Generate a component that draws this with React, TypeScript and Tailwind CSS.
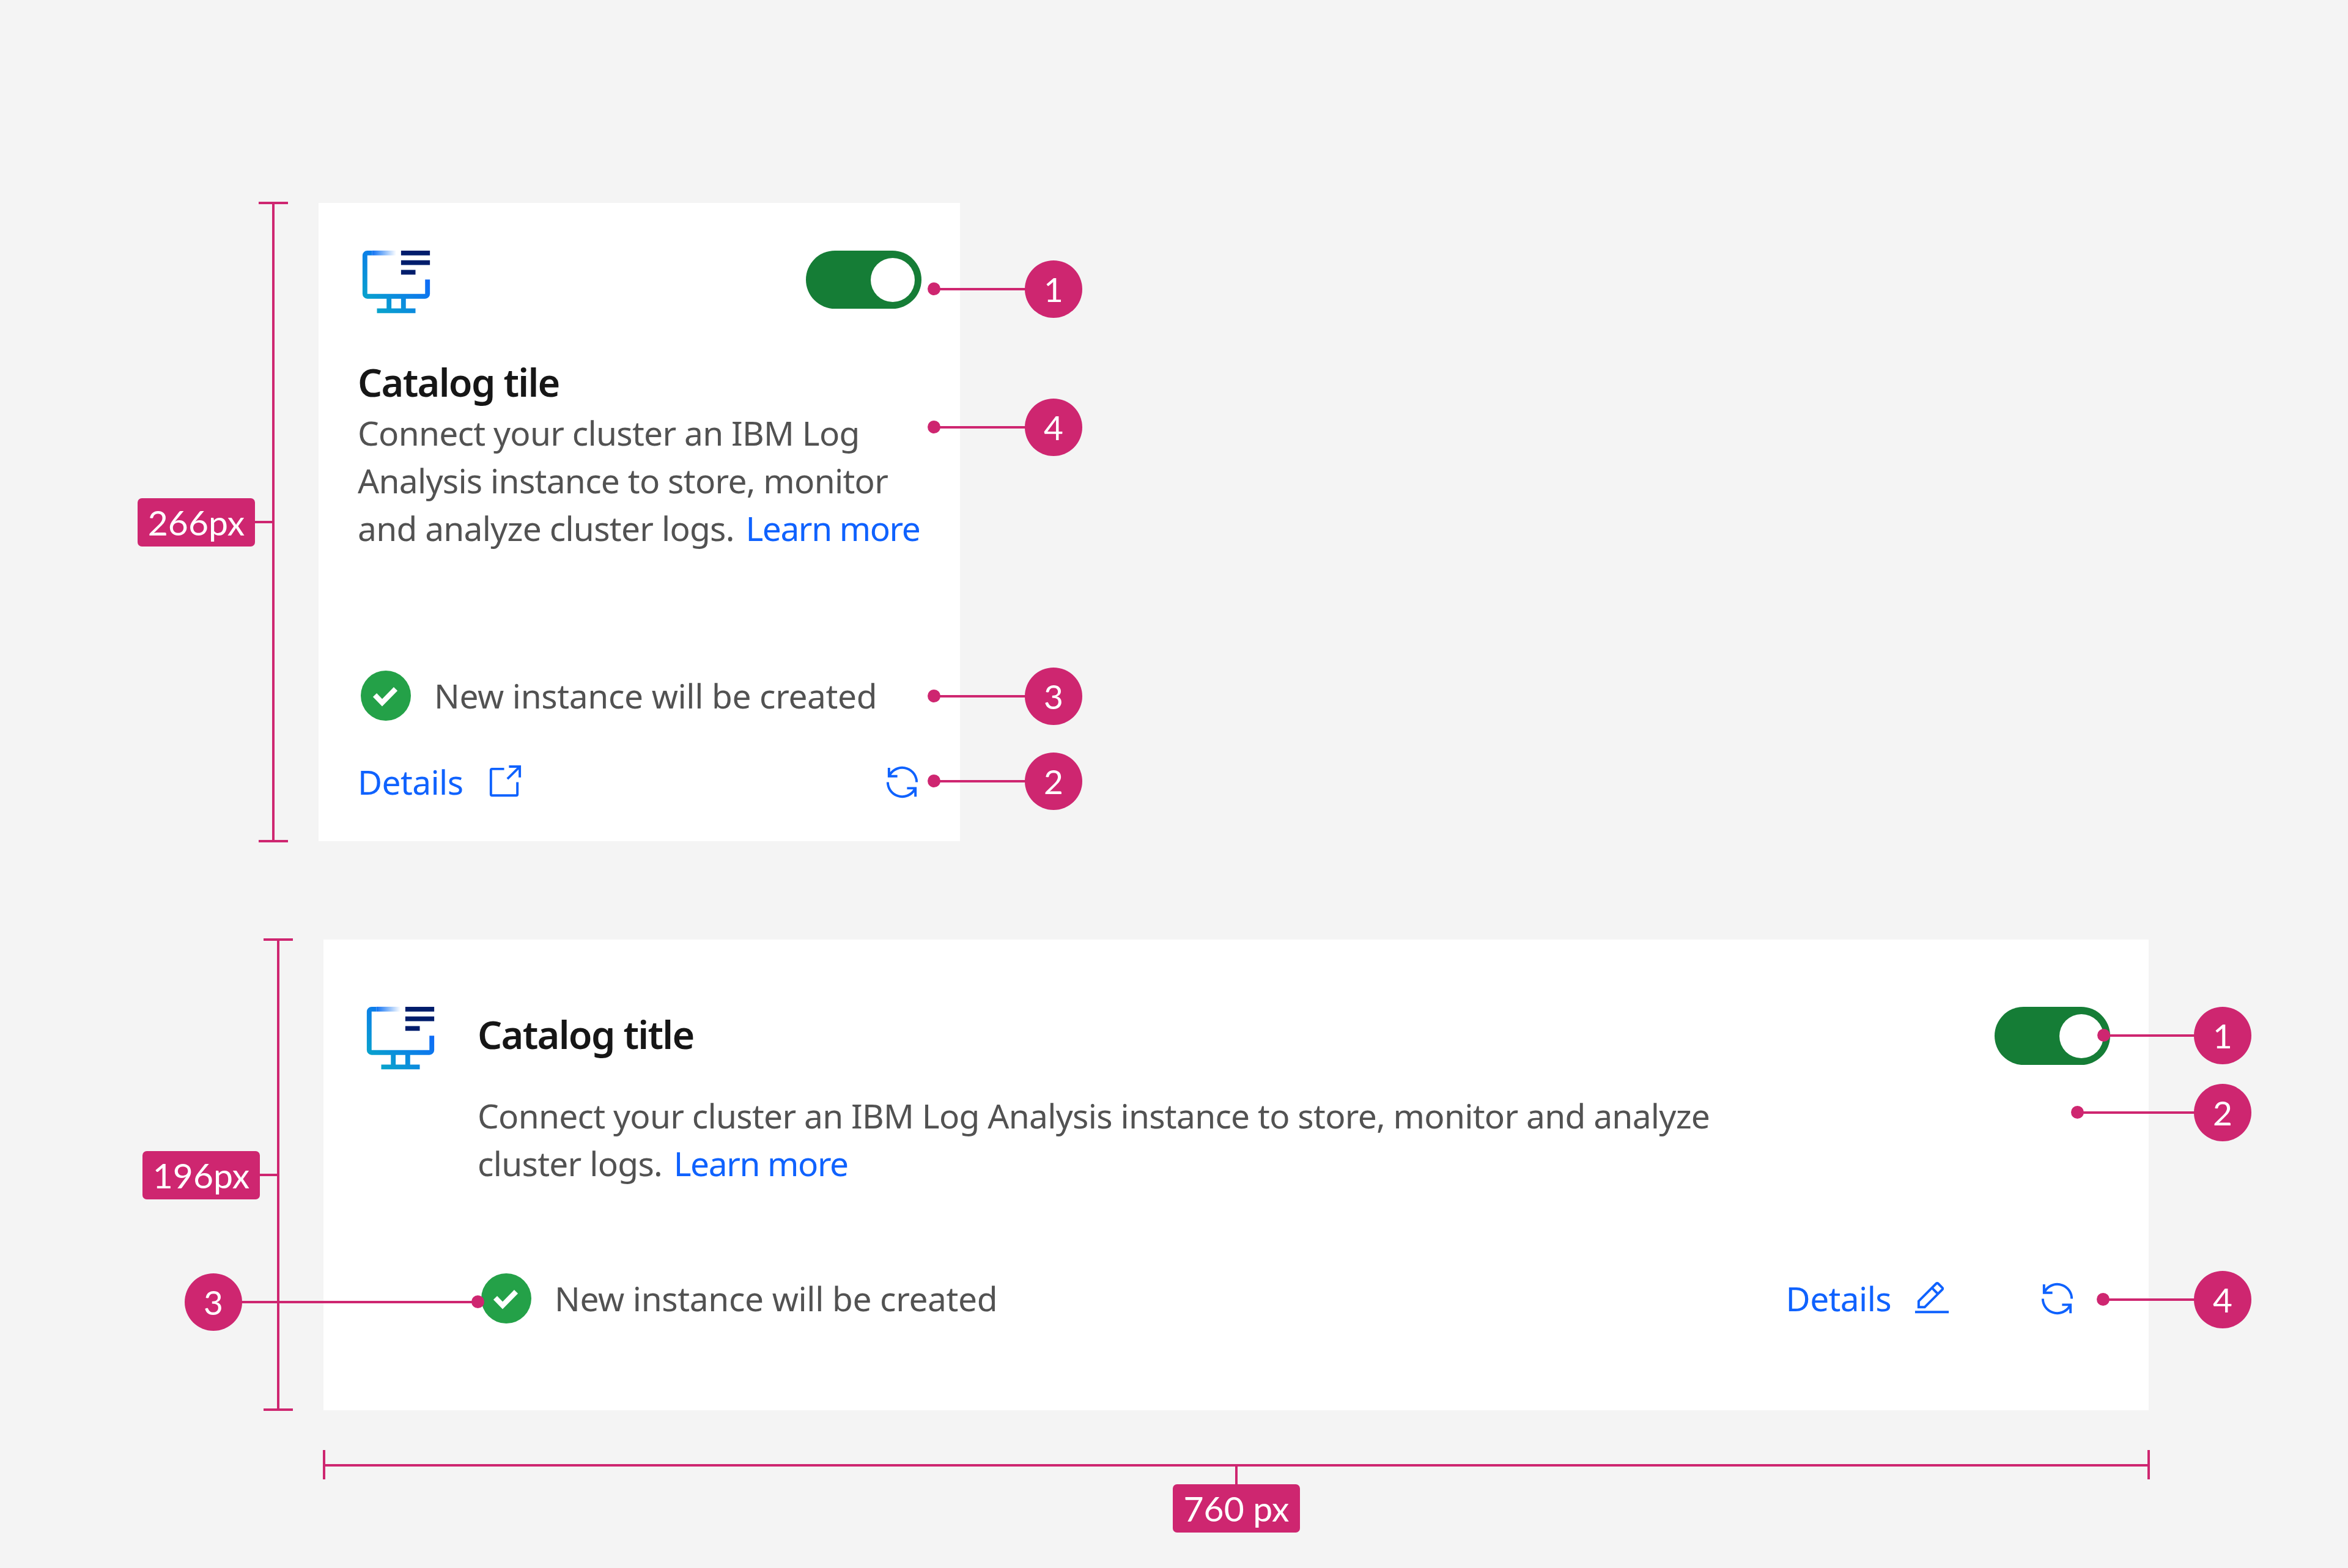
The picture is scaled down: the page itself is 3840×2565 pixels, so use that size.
function Catalog() {
  return (
    <svg viewBox="0 0 32 32" className="w-[126px] h-[126px] shrink-0">
      <defs>
        <linearGradient id="cg" gradientUnits="userSpaceOnUse" x1="6" y1="28" x2="26" y2="6">
          <stop offset="0" stopColor="#08a8c8" />
          <stop offset="1" stopColor="#0f62fe" />
        </linearGradient>
        <linearGradient id="cf" gradientUnits="userSpaceOnUse" x1="6" y1="3" x2="16" y2="3">
          <stop offset="0" stopColor="#0f72f4" />
          <stop offset="1" stopColor="#0f72f4" stopOpacity="0" />
        </linearGradient>
      </defs>
      <path
        fill="url(#cg)"
        fillRule="evenodd"
        d="M4 2h2v2H4v16h24v-6h2v6a2 2 0 0 1-2 2h-8v4h4v2H8v-2h4v-4H4a2 2 0 0 1-2-2V4a2 2 0 0 1 2-2zM14 22v4h4v-4z"
      />
      <rect x="6" y="2" width="10" height="2" fill="url(#cf)" />
      <path fill="#001d6c" d="M18 2h12v2H18zM18 6h12v2H18zM18 10h6v2h-6z" />
    </svg>
  );
}

function Toggle() {
  return (
    <div className="w-[189px] h-[95px] rounded-full bg-[#157d36] flex items-center justify-end pr-[11px] shrink-0">
      <div className="w-[72px] h-[72px] rounded-full bg-white" />
    </div>
  );
}

function Check() {
  return (
    <svg viewBox="0 0 82 82" className="w-[82px] h-[82px] shrink-0">
      <circle cx="41" cy="41" r="41" fill="#24a148" />
      <path d="M23 40 L35 52.5 L57 30" fill="none" stroke="#fff" strokeWidth="8.5" />
    </svg>
  );
}

function Renew() {
  return (
    <svg viewBox="0 0 32 32" className="w-[63px] h-[63px] shrink-0" fill="#0f62fe">
      <path d="M12 10H6.78A11 11 0 0 1 27 16h2A13 13 0 0 0 6 7.68V4H4v8h8zM20 22h5.22A11 11 0 0 1 5 16H3a13 13 0 0 0 23 8.32V28h2V20H20z" />
    </svg>
  );
}

function Launch() {
  return (
    <svg viewBox="0 0 32 32" className="w-[63px] h-[63px] shrink-0" fill="#0f62fe">
      <path d="M26 28H6a2 2 0 0 1-2-2V6a2 2 0 0 1 2-2h10v2H6v20h20V16h2v10a2 2 0 0 1-2 2z" />
      <path d="M20 2v2h6.586L18 12.586 19.414 14 28 5.414V12h2V2H20z" />
    </svg>
  );
}

function Edit() {
  return (
    <svg viewBox="0 0 32 32" className="w-[63px] h-[63px] shrink-0" fill="#0f62fe">
      <path d="M2 26h28v2H2zM25.4 9c.8-.8.8-2 0-2.8l-3.6-3.6c-.8-.8-2-.8-2.8 0l-15 15V24h6.4l15-15zm-5-5L24 7.6l-3 3L17.4 7l3-3zM6 22v-3.6l10-10 3.6 3.6-10 10H6z" />
    </svg>
  );
}

/* Annotation overlays */
function Marker({ n, cx, cy, dot }: { n: number; cx: number; cy: number; dot: number }) {
  const left = Math.min(dot, cx);
  const width = Math.abs(cx - dot);
  return (
    <>
      <div className="absolute h-[4px] bg-[#ce2670]" style={{ left, width, top: cy - 2 }} />
      <div className="absolute w-[21px] h-[21px] rounded-full bg-[#ce2670]" style={{ left: dot - 10, top: cy - 11 }} />
      <div
        className="absolute w-[94px] h-[94px] rounded-full bg-[#ce2670] text-white flex items-center justify-center text-[55px] font-normal font-['Lato',sans-serif]"
        style={{ left: cx - 47, top: cy - 47 }}
      >
        {n}
      </div>
    </>
  );
}

function VBracket({ x, top, bottom, half }: { x: number; top: number; bottom: number; half: number }) {
  return (
    <>
      <div className="absolute w-[4px] bg-[#ce2670]" style={{ left: x - 2, top, height: bottom - top }} />
      <div className="absolute h-[4px] bg-[#ce2670]" style={{ left: x - half, top: top - 2, width: half * 2 }} />
      <div className="absolute h-[4px] bg-[#ce2670]" style={{ left: x - half, top: bottom - 2, width: half * 2 }} />
    </>
  );
}

function Badge({ text, left, top, width }: { text: string; left: number; top: number; width: number }) {
  return (
    <div
      className="absolute h-[79px] rounded-[7px] bg-[#ce2670] text-white flex items-center justify-center text-[57px] font-normal font-['Lato',sans-serif]"
      style={{ left, top, width }}
    >
      {text}
    </div>
  );
}

export default function App() {
  const base = "text-[55px] leading-[78px] font-['Noto_Sans',sans-serif]";
  const body = `${base} text-[#525252] tracking-[-0.7px]`;
  const status = `${base} text-[#525252] tracking-[-0.35px]`;
  const details = `${base} text-[#0f62fe] tracking-[-0.6px]`;
  const title = "text-[63px] leading-[78px] font-semibold text-[#161616] font-['Noto_Sans',sans-serif] tracking-[-1.7px]";
  const link = "text-[#0f62fe] ml-[5px] tracking-[-1.4px]";
  return (
    <div className="relative w-[3840px] h-[2565px] overflow-hidden bg-[#f4f4f4] font-['Noto_Sans',sans-serif]">
      <div className="flex flex-col items-start pl-[521px] pt-[332px]">
        {/* Tile 1 */}
        <div className="w-[1049px] h-[1044px] bg-white flex flex-col pl-[64px] pr-[63px] pt-[70px]">
          <div className="flex items-start justify-between">
            <Catalog />
            <div className="mt-[8px]"><Toggle /></div>
          </div>
          <div className={`${title} mt-[58px]`}>Catalog tile</div>
          <p className={`${body} mt-[5px] w-[950px]`}>
            Connect your cluster an IBM Log
            <br />
            Analysis instance to store, monitor
            <br />
            and analyze cluster logs. <span className={link}>Learn more</span>
          </p>
          <div className="flex items-center mt-[194px] pl-[5px] gap-[38px]">
            <Check />
            <span className={status}>New instance will be created</span>
          </div>
          <div className="flex items-center justify-between mt-[61px]">
            <div className="flex items-center gap-[36px]">
              <span className={details}>Details</span>
              <Launch />
            </div>
            <Renew />
          </div>
        </div>

        {/* Tile 2 */}
        <div className="w-[2985px] h-[770px] mt-[161px] ml-[8px] bg-white flex pl-[63px] pr-[63px] pt-[102px]">
          <Catalog />
          <div className="flex-1 flex flex-col pl-[63px]">
            <div className="flex items-start justify-between">
              <div className={`${title} mt-[14px]`}>Catalog title</div>
              <div className="mt-[8px]"><Toggle /></div>
            </div>
            <p className={`${body} mt-[44px]`}>
              Connect your cluster an IBM Log Analysis instance to store, monitor and analyze
              <br />
              cluster logs. <span className={link}>Learn more</span>
            </p>
            <div className="flex items-center justify-between mt-[141px]">
              <div className="flex items-center gap-[38px] ml-[6px]">
                <Check />
                <span className={status}>New instance will be created</span>
              </div>
              <div className="flex items-center">
                <span className={details}>Details</span>
                <div className="ml-[35px] mr-[142px]"><Edit /></div>
                <div className="mr-[55px]"><Renew /></div>
              </div>
            </div>
          </div>
        </div>
      </div>

      {/* Redlines */}
      <VBracket x={447} top={332} bottom={1376} half={24} />
      <div className="absolute h-[4px] w-[30px] left-[417px] top-[852px] bg-[#ce2670]" />
      <Badge text="266px" left={225} top={815} width={192} />

      <VBracket x={455} top={1537} bottom={2306} half={24} />
      <div className="absolute h-[4px] w-[30px] left-[425px] top-[1920px] bg-[#ce2670]" />
      <Badge text="196px" left={233} top={1883} width={192} />

      <div className="absolute left-[529px] top-[2395px] h-[4px] w-[2985px] bg-[#ce2670]" />
      <div className="absolute left-[528px] top-[2372px] w-[4px] h-[48px] bg-[#ce2670]" />
      <div className="absolute left-[3512px] top-[2372px] w-[4px] h-[48px] bg-[#ce2670]" />
      <div className="absolute left-[2020px] top-[2397px] w-[4px] h-[31px] bg-[#ce2670]" />
      <Badge text="760 px" left={1918} top={2428} width={208} />

      <Marker n={1} cx={1723} cy={473} dot={1527} />
      <Marker n={4} cx={1723} cy={699} dot={1527} />
      <Marker n={3} cx={1723} cy={1139} dot={1527} />
      <Marker n={2} cx={1723} cy={1278} dot={1527} />

      <Marker n={1} cx={3635} cy={1694} dot={3440} />
      <Marker n={2} cx={3635} cy={1820} dot={3397} />
      <Marker n={4} cx={3635} cy={2126} dot={3439} />
      <Marker n={3} cx={349} cy={2130} dot={781} />
    </div>
  );
}
